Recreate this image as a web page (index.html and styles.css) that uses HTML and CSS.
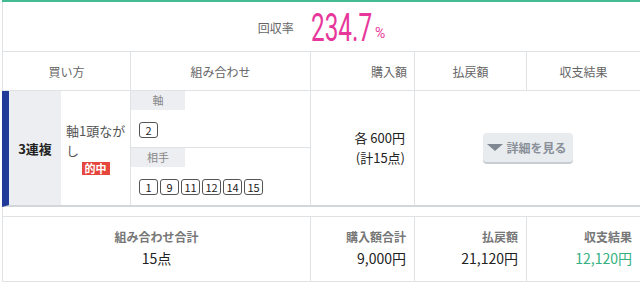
FILE: index.html
```html
<!DOCTYPE html>
<html lang="ja">
<head>
<meta charset="utf-8">
<title>収支結果</title>
<link rel="stylesheet" href="styles.css">
</head>
<body>
<div class="result">
  <div class="rate">
    <span class="rate-label">回収率</span>
    <span class="rate-num"><span>234.7</span></span>
    <span class="rate-unit">%</span>
  </div>
  <div class="row head">
    <div class="cell c">買い方</div>
    <div class="cell c">組み合わせ</div>
    <div class="cell r">購入額</div>
    <div class="cell c">払戻額</div>
    <div class="cell c last">収支結果</div>
  </div>
  <div class="row data">
    <div class="type">3連複</div>
    <div class="method">
      <p class="method-name">軸1頭ながし</p>
      <span class="hit">的中</span>
    </div>
    <div class="combo">
      <div class="group first">
        <div class="glabel">軸</div>
        <div class="nums"><span class="num">2</span></div>
      </div>
      <div class="group">
        <div class="glabel">相手</div>
        <div class="nums">
          <span class="num">1</span><span class="num">9</span><span class="num">11</span><span class="num">12</span><span class="num">14</span><span class="num">15</span>
        </div>
      </div>
    </div>
    <div class="amount">各&nbsp;600円<br>(計15点)</div>
    <div class="action">
      <button class="detail" type="button"><span class="tri"></span>詳細を見る</button>
    </div>
  </div>
  <div class="spacer"></div>
  <div class="row total">
    <div class="tcell c"><div class="tl">組み合わせ合計</div><div class="tv">15点</div></div>
    <div class="tcell r"><div class="tl">購入額合計</div><div class="tv">9,000円</div></div>
    <div class="tcell r"><div class="tl">払戻額</div><div class="tv">21,120円</div></div>
    <div class="tcell r last"><div class="tl">収支結果</div><div class="tv plus">12,120円</div></div>
  </div>
</div>
</body>
</html>
```

FILE: styles.css
```css
* { box-sizing: border-box; }
html, body { margin: 0; padding: 0; background: #fff; }
body {
  font-family: "Noto Sans CJK JP", "Noto Sans", sans-serif;
  color: #222;
  font-size: 13px;
}
.result {
  margin-left: 2px;
  width: 638px;
  border-top: 2px solid #45bb93;
}
.rate {
  height: 50px;
  border-left: 1px solid #dfe3e6;
  border-bottom: 1px solid #dfe3e6;
  display: flex;
  align-items: center;
  justify-content: center;
}
.rate-label {
  font-size: 12px;
  color: #666;
  margin-right: 17px;
  margin-top: 2px;
}
.rate-num {
  display: inline-block;
  width: 64px;
  white-space: nowrap;
  font-family: Roboto, "Liberation Sans", sans-serif;
  font-size: 38px;
  line-height: 38px;
  color: #e8379b;
  margin-top: 3px;
}
.rate-num span {
  display: inline-block;
  transform: scaleX(0.64);
  transform-origin: 0 50%;
}
.rate-unit {
  font-family: Roboto, "Liberation Sans", sans-serif;
  font-size: 14px;
  color: #e8379b;
  margin-top: 12px;
}
.row {
  display: grid;
  border-left: 1px solid #dfe3e6;
}
.head {
  grid-template-columns: 128px 180px 104px 112px 1fr;
  height: 39px;
  border-bottom: 1px solid #dfe3e6;
}
.cell {
  border-right: 1px solid #dfe3e6;
  font-size: 12px;
  color: #666;
  display: flex;
  align-items: center;
}
.cell.c { justify-content: center; }
.cell.r { justify-content: flex-end; padding-right: 7px; }
.cell.last, .tcell.last { border-right: none; }

.data {
  grid-template-columns: 52px 70px 180px 104px 1fr;
  border-left: 7px solid #1f3a98;
  height: 116px;
  border-bottom: 2px solid #d3d7db;
}
.type {
  background: #eceef1;
  font-weight: 700;
  font-size: 13px;
  display: flex;
  align-items: center;
  justify-content: center;
  color: #222;
}
.method {
  border-right: 1px solid #dfe3e6;
  display: flex;
  flex-direction: column;
  justify-content: center;
  padding: 0 3px 0 5px;
}
.method-name {
  margin: 0;
  font-size: 13px;
  line-height: 20px;
  color: #555;
}
.hit {
  align-self: center;
  margin-top: 1px;
  margin-left: -2px;
  background: #e5463d;
  color: #fff;
  font-weight: 700;
  font-size: 11px;
  line-height: 13px;
  padding: 0 3px;
}
.combo {
  border-right: 1px solid #dfe3e6;
  display: flex;
  flex-direction: column;
}
.group { flex: 1; }
.group.first {
  flex: none;
  height: 57px;
  border-bottom: 1px solid #dfe3e6;
}
.glabel {
  width: 54px;
  height: 19px;
  background: #eceef1;
  color: #888;
  font-size: 11px;
  line-height: 19px;
  text-align: center;
}
.nums {
  display: flex;
  gap: 2px;
  padding: 12px 8px 0;
}
.num {
  width: 19px;
  height: 16px;
  border: 1px solid #555;
  border-radius: 3px;
  font-size: 11px;
  line-height: 14px;
  text-align: center;
  color: #222;
}
.amount {
  border-right: 1px solid #dfe3e6;
  display: flex;
  flex-direction: column;
  justify-content: center;
  align-items: flex-end;
  text-align: right;
  padding-right: 9px;
  font-size: 13px;
  line-height: 20px;
  color: #222;
}
.action {
  display: flex;
  align-items: center;
  justify-content: center;
}
.detail {
  display: flex;
  align-items: center;
  height: 29px;
  width: 90px;
  margin-top: -1px;
  padding: 0 0 0 4px;
  border: none;
  border-radius: 4px;
  background: #e9ecef;
  box-shadow: 0 2px 0 #c8cdd3;
  font-family: inherit;
  font-size: 12px;
  font-weight: 700;
  color: #8a9099;
}
.tri {
  width: 0;
  height: 0;
  border-left: 8px solid transparent;
  border-right: 8px solid transparent;
  border-top: 7px solid #7f8791;
  margin-right: 4px;
}
.spacer {
  height: 9px;
  border-left: 1px solid #dfe3e6;
}
.total {
  grid-template-columns: 308px 104px 112px 1fr;
  border-top: 1px solid #dfe3e6;
  border-bottom: 1px solid #dfe3e6;
  height: 66px;
}
.tcell {
  border-right: 1px solid #dfe3e6;
  padding-top: 10px;
}
.tcell.c { text-align: center; }
.tcell.r { text-align: right; padding-right: 8px; }
.tl {
  font-size: 12px;
  line-height: 20px;
  font-weight: 700;
  color: #777;
}
.tv {
  font-size: 14px;
  line-height: 22px;
  color: #222;
}
.tv.plus { color: #33b080; }
```
